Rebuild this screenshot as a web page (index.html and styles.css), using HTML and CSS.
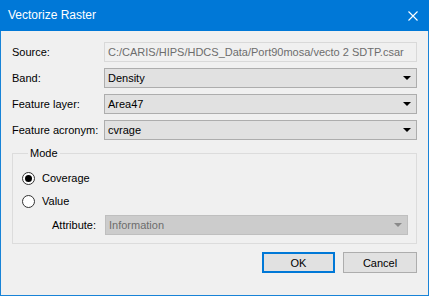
FILE: index.html
```html
<!DOCTYPE html>
<html lang="en">
    <head>
        <meta charset="UTF-8" />
        <title>Vectorize Raster</title>
        <link rel="stylesheet" href="styles.css">
    </head>
    <body>
        <div class="window">
            <div class="titlebar">
                <span class="title">Vectorize Raster</span>
                <svg class="close" width="10" height="10" viewBox="0 0 10 10">
                    <path d="M0.5 0.5 L9.5 9.5 M9.5 0.5 L0.5 9.5" stroke="#fff" stroke-width="1.1" fill="none" />
                </svg>
            </div>

            <div class="content">
                <div class="row">
                    <label class="label">Source:</label>
                    <div class="field readonly">C:/CARIS/HIPS/HDCS_Data/Port90mosa/vecto 2 SDTP.csar</div>
                </div>
                <div class="row">
                    <label class="label">Band:</label>
                    <div class="field combo">Density<span class="arrow"></span></div>
                </div>
                <div class="row">
                    <label class="label">Feature layer:</label>
                    <div class="field combo">Area47<span class="arrow"></span></div>
                </div>
                <div class="row">
                    <label class="label">Feature acronym:</label>
                    <div class="field combo">cvrage<span class="arrow"></span></div>
                </div>

                <fieldset class="group">
                    <legend>Mode</legend>
                    <div class="radio">
                        <span class="dot checked"></span>
                        <span>Coverage</span>
                    </div>
                    <div class="radio">
                        <span class="dot"></span>
                        <span>Value</span>
                    </div>
                    <div class="attr-row">
                        <label class="attr-label">Attribute:</label>
                        <div class="field combo disabled">Information<span class="arrow"></span></div>
                    </div>
                </fieldset>

                <div class="buttons">
                    <button class="btn default">OK</button>
                    <button class="btn">Cancel</button>
                </div>
            </div>
        </div>
    </body>
</html>
```

FILE: styles.css
```css
* {
    margin: 0;
    padding: 0;
    box-sizing: border-box;
}
body {
    font-family: "Liberation Sans", Arial, sans-serif;
    font-size: 11px;
    color: #000;
    background: #f0f0f0;
}

.window {
    width: 429px;
    height: 296px;
    border: 1px solid #1883d7;
    border-top: none;
    background: #f0f0f0;
    display: flex;
    flex-direction: column;
}

.titlebar {
    height: 31px;
    background: #0078d7;
    color: white;
    display: flex;
    align-items: center;
    justify-content: space-between;
    padding: 0 10px 0 8px;
    margin: 0 -1px;
}
.title {
    font-size: 12px;
    position: relative;
    top: -1px;
}
.close {
    margin-right: 1px;
}

.content {
    padding: 11px 11px 0 11px;
}

.row {
    display: flex;
    align-items: center;
    height: 20px;
    margin-bottom: 6px;
}
.label {
    width: 92px;
    flex-shrink: 0;
    white-space: nowrap;
}

.field {
    flex: 1;
    min-width: 0;
    height: 20px;
    line-height: 18px;
    padding: 0 3px;
    border: 1px solid #adadad;
    white-space: nowrap;
    overflow: hidden;
}
.readonly {
    background: #f0f0f0;
    border-color: #d9d9d9;
    color: #6d6d6d;
}
.combo {
    display: flex;
    justify-content: space-between;
    align-items: center;
    background: #e1e1e1;
    padding-right: 5px;
}
.arrow {
    width: 0;
    height: 0;
    border-left: 4px solid transparent;
    border-right: 4px solid transparent;
    border-top: 4px solid #000;
}

.group {
    border: 1px solid #dcdcdc;
    margin-top: 6px;
    padding: 10px 8px 8px 9px;
    height: 98px;
}
.group legend {
    margin-left: 6px;
    padding: 0 2px;
    line-height: 14px;
}

.radio {
    display: flex;
    align-items: center;
    gap: 7px;
    height: 16px;
    margin-bottom: 7px;
}
.dot {
    width: 13px;
    height: 13px;
    border-radius: 50%;
    border: 1px solid #333;
    background: #fff;
    display: flex;
    align-items: center;
    justify-content: center;
}
.dot.checked::after {
    content: "";
    width: 7px;
    height: 7px;
    border-radius: 50%;
    background: #000;
}

.attr-row {
    display: flex;
    align-items: center;
    padding-left: 30px;
    margin-top: -1px;
}
.attr-label {
    width: 53px;
    flex-shrink: 0;
}
.disabled {
    background: #cccccc;
    border-color: #bfbfbf;
    color: #6d6d6d;
}
.disabled .arrow {
    border-top-color: #8a8a8a;
}

.buttons {
    display: flex;
    justify-content: flex-end;
    gap: 8px;
    margin-top: 8px;
}
.btn {
    font-family: inherit;
    font-size: 11px;
    height: 21px;
    background: #e1e1e1;
    border: 1px solid #adadad;
    color: #000;
}
.btn.default {
    width: 73px;
    border: 2px solid #0078d7;
}
.btn:last-child {
    width: 74px;
}
```
